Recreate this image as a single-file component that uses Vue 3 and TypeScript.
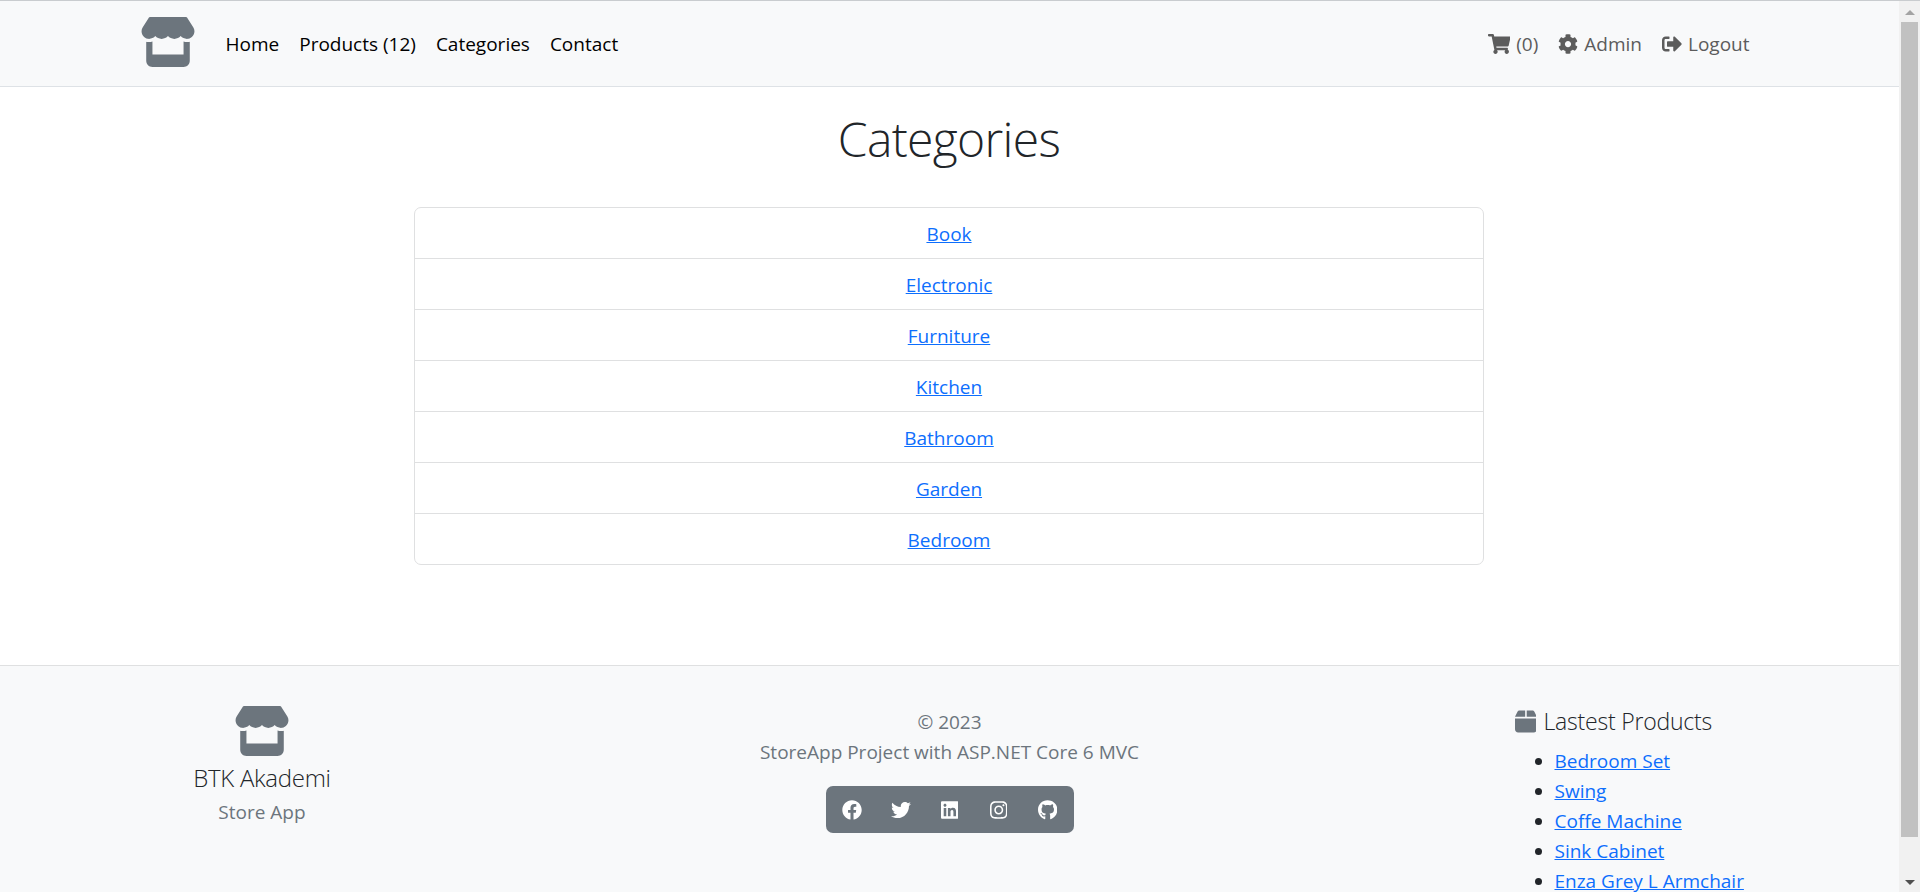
<template>
  <div class="window">
    <div class="page">
      <nav class="navbar">
        <div class="container nav-inner">
          <a class="brand" href="#">
            <svg class="logo" viewBox="0 0 576 512"><path :d="storePath" /></svg>
          </a>
          <ul class="nav-left">
            <li v-for="link in leftLinks" :key="link"><a href="#">{{ link }}</a></li>
          </ul>
          <ul class="nav-right">
            <li v-for="link in rightLinks" :key="link.text">
              <a href="#">
                <svg :viewBox="link.box"><path :d="link.path" /></svg>
                {{ link.text }}
              </a>
            </li>
          </ul>
        </div>
      </nav>

      <main class="container content">
        <h1>Categories</h1>
        <ul class="list-group">
          <li v-for="cat in categories" :key="cat"><a href="#">{{ cat }}</a></li>
        </ul>
      </main>

      <footer class="footer">
        <div class="container footer-grid">
          <div class="about">
            <svg class="logo" viewBox="0 0 576 512"><path :d="storePath" /></svg>
            <div class="lead">BTK Akademi</div>
            <div class="muted">Store App</div>
          </div>
          <div class="middle">
            <div class="muted">© 2023</div>
            <div class="muted">StoreApp Project with ASP.NET Core 6 MVC</div>
            <div class="socials">
              <a v-for="s in socials" :key="s.name" href="#" :title="s.name">
                <svg :viewBox="s.box"><path :d="s.path" /></svg>
              </a>
            </div>
          </div>
          <div class="latest">
            <div class="lead latest-title">
              <svg viewBox="0 0 448 512"><path :d="boxPath" /></svg>
              Lastest Products
            </div>
            <ul>
              <li v-for="p in products" :key="p"><a href="#">{{ p }}</a></li>
            </ul>
          </div>
        </div>
      </footer>
    </div>

    <div class="scrollbar">
      <span class="arrow up"></span>
      <div class="thumb"></div>
      <span class="arrow down"></span>
    </div>
  </div>
</template>

<script setup lang="ts">
const storePath =
  'M547.6 103.8L490.3 13.1C485.2 5 476.1 0 466.4 0H109.6C99.9 0 90.8 5 85.7 13.1L28.3 103.8c-29.6 46.8-3.4 111.9 51.9 119.4c4 .5 8.1 .8 12.1 .8c26.1 0 49.3-11.4 65.2-29c15.9 17.6 39.1 29 65.2 29c26.1 0 49.3-11.4 65.2-29c15.9 17.6 39.1 29 65.2 29c26.2 0 49.3-11.4 65.2-29c16 17.6 39.1 29 65.2 29c4.1 0 8.1-.3 12.1-.8c55.5-7.4 81.8-72.5 52.1-119.4zM499.7 254.9l-.1 0c-5.3 .7-10.7 1.1-16.2 1.1c-12.4 0-24.3-1.9-35.4-5.3V384H128V250.6c-11.2 3.5-23.2 5.4-35.6 5.4c-5.5 0-11-.4-16.3-1.1l-.1 0c-4.1-.6-8.1-1.3-12-2.3V384v64c0 35.3 28.7 64 64 64H448c35.3 0 64-28.7 64-64V384 252.6c-4 1-8 1.8-12.3 2.3z'

const boxPath =
  'M50.7 58.5L0 160H208V32H93.7C75.5 32 58.9 42.3 50.7 58.5zM240 160H448L397.3 58.5C389.1 42.3 372.5 32 354.3 32H240V160zm208 32H0V416c0 35.3 28.7 64 64 64H384c35.3 0 64-28.7 64-64V192z'

const leftLinks = ['Home', 'Products (12)', 'Categories', 'Contact']

const rightLinks = [
  {
    text: '(0)',
    box: '0 0 576 512',
    path: 'M528.12 301.319l47.273-208C578.806 78.301 567.391 64 551.99 64H159.208l-9.166-44.81C147.758 8.021 137.93 0 126.529 0H24C10.745 0 0 10.745 0 24v16c0 13.255 10.745 24 24 24h69.883l70.248 343.435C147.325 417.1 136 435.222 136 456c0 30.928 25.072 56 56 56s56-25.072 56-56c0-15.674-6.447-29.835-16.824-40h209.647C430.447 426.165 424 440.326 424 456c0 30.928 25.072 56 56 56s56-25.072 56-56c0-22.172-12.888-41.332-31.579-50.405l5.517-24.276c3.413-15.018-8.002-29.319-23.403-29.319H218.117l-6.545-32h293.145c11.206 0 20.92-7.754 23.403-18.681z',
  },
  {
    text: 'Admin',
    box: '0 0 512 512',
    path: 'M487.4 315.7l-42.6-24.6c4.3-23.2 4.3-47 0-70.2l42.6-24.6c4.9-2.8 7.1-8.6 5.5-14-11.1-35.6-30-67.8-54.7-94.6-3.8-4.1-10-5.1-14.8-2.3L380.8 110c-17.9-15.4-38.5-27.3-60.8-35.1V25.8c0-5.6-3.9-10.5-9.4-11.7-36.7-8.2-74.3-7.8-109.2 0-5.5 1.2-9.4 6.1-9.4 11.7V75c-22.2 7.9-42.8 19.8-60.8 35.1L88.7 85.5c-4.9-2.8-11-1.9-14.8 2.3-24.7 26.7-43.6 58.9-54.7 94.6-1.7 5.4.6 11.2 5.5 14L67.3 221c-4.3 23.2-4.3 47 0 70.2l-42.6 24.6c-4.9 2.8-7.1 8.6-5.5 14 11.1 35.6 30 67.8 54.7 94.6 3.8 4.1 10 5.1 14.8 2.3l42.6-24.6c17.9 15.4 38.5 27.3 60.8 35.1v49.2c0 5.6 3.9 10.5 9.4 11.7 36.7 8.2 74.3 7.8 109.2 0 5.5-1.2 9.4-6.1 9.4-11.7v-49.2c22.2-7.9 42.8-19.8 60.8-35.1l42.6 24.6c4.9 2.8 11 1.9 14.8-2.3 24.7-26.7 43.6-58.9 54.7-94.6 1.5-5.5-.7-11.3-5.6-14.1zM256 336c-44.1 0-80-35.9-80-80s35.9-80 80-80 80 35.9 80 80-35.9 80-80 80z',
  },
  {
    text: 'Logout',
    box: '0 0 512 512',
    path: 'M497 273L329 441c-15 15-41 4.5-41-17v-96H152c-13.3 0-24-10.7-24-24v-96c0-13.3 10.7-24 24-24h136V88c0-21.4 25.9-32 41-17l168 168c9.3 9.4 9.3 24.6 0 34zM192 436v-40c0-6.6-5.4-12-12-12H96c-17.7 0-32-14.3-32-32V160c0-17.7 14.3-32 32-32h84c6.6 0 12-5.4 12-12V76c0-6.6-5.4-12-12-12H96c-53 0-96 43-96 96v192c0 53 43 96 96 96h84c6.6 0 12-5.4 12-12z',
  },
]

const categories = ['Book', 'Electronic', 'Furniture', 'Kitchen', 'Bathroom', 'Garden', 'Bedroom']

const products = ['Bedroom Set', 'Swing', 'Coffe Machine', 'Sink Cabinet', 'Enza Grey L Armchair']

const socials = [
  {
    name: 'Facebook',
    box: '0 0 512 512',
    path: 'M504 256C504 119 393 8 256 8S8 119 8 256c0 123.78 90.69 226.38 209.25 245V327.69h-63V256h63v-54.64c0-62.15 37-96.48 93.67-96.48 27.14 0 55.52 4.84 55.52 4.84v61h-31.28c-30.8 0-40.41 19.12-40.41 38.73V256h68.78l-11 71.69h-57.78V501C413.31 482.38 504 379.78 504 256z',
  },
  {
    name: 'Twitter',
    box: '0 0 512 512',
    path: 'M459.37 151.716c.325 4.548.325 9.097.325 13.645 0 138.72-105.583 298.558-298.558 298.558-59.452 0-114.68-17.219-161.137-47.106 8.447.974 16.568 1.299 25.34 1.299 49.055 0 94.213-16.568 130.274-44.832-46.132-.975-84.792-31.188-98.112-72.772 6.498.974 12.995 1.624 19.818 1.624 9.421 0 18.843-1.3 27.614-3.573-48.081-9.747-84.143-51.98-84.143-102.985v-1.299c13.969 7.797 30.214 12.67 47.431 13.319-28.264-18.843-46.781-51.005-46.781-87.391 0-19.492 5.197-37.36 14.294-52.954 51.655 63.675 129.3 105.258 216.365 109.807-1.624-7.797-2.599-15.918-2.599-24.04 0-57.828 46.782-104.934 104.934-104.934 30.213 0 57.502 12.67 76.67 33.137 23.715-4.548 46.456-13.32 66.599-25.34-7.798 24.366-24.366 44.833-46.132 57.827 21.117-2.273 41.584-8.122 60.426-16.243-14.292 20.791-32.161 39.308-52.628 54.253z',
  },
  {
    name: 'LinkedIn',
    box: '0 0 448 512',
    path: 'M416 32H31.9C14.3 32 0 46.5 0 64.3v383.4C0 465.5 14.3 480 31.9 480H416c17.6 0 32-14.5 32-32.3V64.3c0-17.8-14.4-32.3-32-32.3zM135.4 416H69V202.2h66.5V416zm-33.2-243c-21.3 0-38.5-17.3-38.5-38.5S80.9 96 102.2 96c21.2 0 38.5 17.3 38.5 38.5 0 21.3-17.2 38.5-38.5 38.5zm282.1 243h-66.4V312c0-24.8-.5-56.7-34.5-56.7-34.6 0-39.9 27-39.9 54.9V416h-66.4V202.2h63.7v29.2h.9c8.9-16.8 30.6-34.5 62.9-34.5 67.2 0 79.7 44.3 79.7 101.9V416z',
  },
  {
    name: 'Instagram',
    box: '0 0 448 512',
    path: 'M224.1 141c-63.6 0-114.9 51.3-114.9 114.9s51.3 114.9 114.9 114.9S339 319.5 339 255.9 287.7 141 224.1 141zm0 189.6c-41.1 0-74.7-33.5-74.7-74.7s33.5-74.7 74.7-74.7 74.7 33.5 74.7 74.7-33.6 74.7-74.7 74.7zm146.4-194.3c0 14.9-12 26.8-26.8 26.8-14.9 0-26.8-12-26.8-26.8s12-26.8 26.8-26.8 26.8 12 26.8 26.8zm76.1 27.2c-1.7-35.9-9.9-67.7-36.2-93.9-26.2-26.2-58-34.4-93.9-36.2-37-2.1-147.9-2.1-184.9 0-35.8 1.7-67.6 9.9-93.9 36.1s-34.4 58-36.2 93.9c-2.1 37-2.1 147.9 0 184.9 1.7 35.9 9.9 67.7 36.2 93.9s58 34.4 93.9 36.2c37 2.1 147.9 2.1 184.9 0 35.9-1.7 67.7-9.9 93.9-36.2 26.2-26.2 34.4-58 36.2-93.9 2.1-37 2.1-147.8 0-184.8zM398.8 388c-7.8 19.6-22.9 34.7-42.6 42.6-29.5 11.7-99.5 9-132.1 9s-102.7 2.6-132.1-9c-19.6-7.8-34.7-22.9-42.6-42.6-11.7-29.5-9-99.5-9-132.1s-2.6-102.7 9-132.1c7.8-19.6 22.9-34.7 42.6-42.6 29.5-11.7 99.5-9 132.1-9s102.7-2.6 132.1 9c19.6 7.8 34.7 22.9 42.6 42.6 11.7 29.5 9 99.5 9 132.1s2.7 102.7-9 132.1z',
  },
  {
    name: 'GitHub',
    box: '0 0 496 512',
    path: 'M165.9 397.4c0 2-2.3 3.6-5.2 3.6-3.3.3-5.6-1.3-5.6-3.6 0-2 2.3-3.6 5.2-3.6 3-.3 5.6 1.3 5.6 3.6zm-31.1-4.5c-.7 2 1.3 4.3 4.3 4.9 2.6 1 5.6 0 6.2-2s-1.3-4.3-4.3-5.2c-2.6-.7-5.5.3-6.2 2.3zm44.2-1.7c-2.9.7-4.9 2.6-4.6 4.9.3 2 2.9 3.3 5.9 2.6 2.9-.7 4.9-2.6 4.6-4.6-.3-1.9-3-3.2-5.9-2.9zM244.8 8C106.1 8 0 113.3 0 252c0 110.9 69.8 205.8 169.5 239.2 12.8 2.3 17.3-5.6 17.3-12.1 0-6.2-.3-40.4-.3-61.4 0 0-70 15-84.7-29.8 0 0-11.4-29.1-27.8-36.6 0 0-22.9-15.7 1.6-15.4 0 0 24.9 2 38.6 25.8 21.9 38.6 58.6 27.5 72.9 20.9 2.3-16 8.8-27.1 16-33.7-55.9-6.2-112.3-14.3-112.3-110.5 0-27.5 7.6-41.3 23.6-58.9-2.6-6.5-11.1-33.3 2.6-67.9 20.9-6.5 69 27 69 27 20-5.6 41.5-8.5 62.8-8.5s42.8 2.9 62.8 8.5c0 0 48.1-33.6 69-27 13.7 34.7 5.2 61.4 2.6 67.9 16 17.7 25.8 31.5 25.8 58.9 0 96.5-58.9 104.2-114.8 110.5 9.2 7.9 17 22.9 17 46.4 0 33.7-.3 75.4-.3 83.6 0 6.5 4.6 14.4 17.3 12.1C428.2 457.8 496 362.9 496 252 496 113.3 389.9 8 244.8 8zM97.2 352.9c-1.3 1-1 3.3.7 5.2 1.6 1.6 3.9 2.3 5.2 1 1.3-1 1-3.3-.7-5.2-1.6-1.6-3.9-2.3-5.2-1zm-10.8-8.1c-.7 1.3.3 2.9 2.3 3.9 1.6 1 3.6.7 4.3-.7.7-1.3-.3-2.9-2.3-3.9-2-.6-3.6-.3-4.3.7zm32.4 35.6c-1.6 1.3-1 4.3 1.3 6.2 2.3 2.3 5.2 2.6 6.5 1 1.3-1.3.7-4.3-1.3-6.2-2.2-2.3-5.2-2.6-6.5-1zm-11.4-14.7c-1.6 1-1.6 3.6 0 5.9 1.6 2.3 4.3 3.3 5.6 2.3 1.6-1.3 1.6-3.9 0-6.2-1.4-2.3-4-3.3-5.6-2z',
  },
]
</script>

<style scoped>
.window {
  display: flex;
  height: 100vh;
  overflow: hidden;
  box-sizing: border-box;
  border-top: 1px solid #c9cccf;
  font-family: 'Open Sans', 'Noto Sans', sans-serif;
  font-size: 19px;
  line-height: 30px;
  color: #212529;
}

.page {
  flex: 1;
  min-width: 0;
  overflow: hidden;
}

.container {
  width: 1620px;
  margin: 0 auto;
}

ul {
  margin: 0;
  padding: 0;
  list-style: none;
}

a {
  color: #0d6efd;
}

svg {
  fill: currentColor;
  display: inline-block;
}

/* navbar */
.navbar {
  background: #f8f9fa;
  border-bottom: 1px solid #dee2e6;
  height: 85px;
}

.nav-inner {
  display: flex;
  align-items: center;
  height: 100%;
}

.brand {
  display: flex;
  margin-right: 20px;
  margin-bottom: 3px;
  color: #6c757d;
}

.logo {
  width: 56px;
  height: 50px;
}

.nav-left,
.nav-right {
  display: flex;
}

.nav-left {
  flex: 1;
}

.nav-left a,
.nav-right a {
  display: flex;
  align-items: center;
  padding: 0 10px;
  text-decoration: none;
}

.nav-left a {
  color: #000;
}

.nav-right a {
  gap: 6px;
  color: #5c5c5c;
}

.nav-right svg {
  height: 20px;
}

/* main */
.content {
  height: 578px;
  box-sizing: border-box;
  padding: 22px 1px 0 0;
}

h1 {
  margin: 0 0 38px;
  font-size: 48px;
  font-weight: 300;
  letter-spacing: -0.65px;
  line-height: 60px;
  text-align: center;
}

.list-group {
  box-sizing: border-box;
  width: 1070px;
  margin: 0 auto;
  border: 1px solid #dfe0e1;
  border-radius: 7px;
  text-align: center;
}

.list-group li {
  height: 51px;
  line-height: 52px;
  box-sizing: border-box;
}

.list-group li:first-child {
  height: 50px;
}

.list-group li + li {
  border-top: 1px solid #dfe0e1;
}

/* footer */
.footer {
  background: #f8f9fa;
  border-top: 1px solid #dfe0e1;
  height: 240px;
}

.footer-grid {
  display: grid;
  grid-template-columns: 245px 1100px 245px;
  gap: 0 15px;
  padding-top: 40px;
}

.about,
.middle {
  text-align: center;
}

.about {
  color: #6c757d;
}

.about .logo {
  display: block;
  margin: 0 auto;
}

.lead {
  font-size: 24px;
  font-weight: 300;
  letter-spacing: -0.3px;
  color: #212529;
}

.about .lead {
  margin-top: 7px;
}

.about .muted {
  margin-top: 4px;
}

.muted {
  color: #6c757d;
}

.middle {
  padding-top: 1px;
}

.socials {
  display: inline-flex;
  align-items: center;
  margin-top: 19px;
  height: 47px;
  padding: 0 1.5px;
  background: #6c757d;
  border-radius: 7px;
}

.socials a {
  display: flex;
  justify-content: center;
  width: 49px;
  color: #fff;
}

.socials svg {
  height: 20px;
}

.latest-title {
  display: flex;
  align-items: center;
  gap: 7px;
  margin-bottom: 10px;
  font-size: 23px;
  letter-spacing: -0.2px;
}

.latest-title svg {
  height: 25px;
  color: #6c757d;
}

.latest ul {
  list-style: disc;
  padding-left: 40px;
}

/* fake browser scrollbar */
.scrollbar {
  width: 21px;
  display: flex;
  flex-direction: column;
  align-items: center;
  background: #f1f1f1;
}

.thumb {
  width: 17px;
  height: 815px;
  background: #c1c1c1;
}

.arrow {
  width: 0;
  height: 0;
  border-left: 5px solid transparent;
  border-right: 5px solid transparent;
}

.arrow.up {
  border-bottom: 5px solid #a3a3a3;
  margin: 9px 0 7px;
}

.arrow.down {
  border-top: 5px solid #505050;
  margin-top: 43px;
}
</style>

<style>
html,
body {
  margin: 0;
  overflow: hidden;
}
</style>
